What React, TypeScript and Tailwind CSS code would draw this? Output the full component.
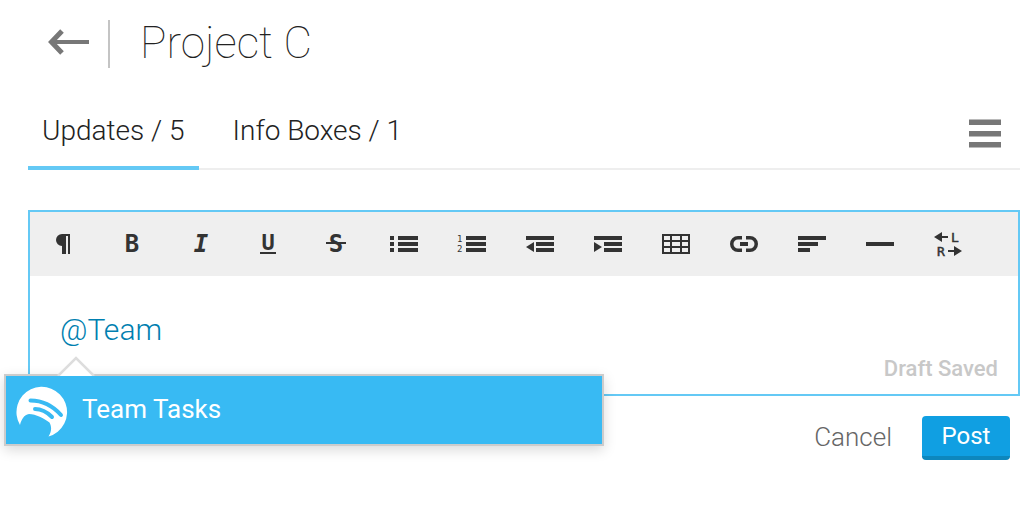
import React from 'react';

type Tool = { label: string; icon: React.ReactNode };

const mono = '"DejaVu Sans Mono", monospace';

const TOOLS: Tool[] = [
  { label: 'Paragraph', icon: <path d="M12 4h8v20h-2V6h-2v18h-4v-8a6 6 0 0 1 0-12z" /> },
  {
    label: 'Bold',
    icon: <text x="14" y="22" textAnchor="middle" fontFamily={mono} fontWeight="700" fontSize="24">B</text>,
  },
  {
    label: 'Italic',
    icon: <text x="15" y="22" textAnchor="middle" fontFamily={mono} fontWeight="700" fontStyle="italic" fontSize="24">I</text>,
  },
  {
    label: 'Underline',
    icon: (
      <>
        <text x="14" y="20" textAnchor="middle" fontFamily={mono} fontWeight="700" fontSize="22">U</text>
        <rect x="6" y="22" width="16" height="2" />
      </>
    ),
  },
  {
    label: 'Strikethrough',
    icon: (
      <>
        <text x="14" y="22" textAnchor="middle" fontFamily={mono} fontWeight="700" fontSize="24">S</text>
        <rect x="4" y="12" width="20" height="2" />
      </>
    ),
  },
  {
    label: 'Bulleted list',
    icon: <path d="M0 6h4v4H0zM8 6h20v4H8zM0 12h4v4H0zM8 12h20v4H8zM0 18h4v4H0zM8 18h20v4H8z" />,
  },
  {
    label: 'Numbered list',
    icon: (
      <>
        <text x="-1" y="12" fontFamily={mono} fontSize="9">1</text>
        <text x="-1" y="22" fontFamily={mono} fontSize="9">2</text>
        <path d="M8 6h20v4H8zM8 12h20v4H8zM8 18h20v4H8z" />
      </>
    ),
  },
  { label: 'Outdent', icon: <path d="M0 6h28v4H0zM10 12h18v4H10zM10 18h18v4H10zM8 12v10L0 17z" /> },
  { label: 'Indent', icon: <path d="M0 6h28v4H0zM10 12h18v4H10zM10 18h18v4H10zM0 12v10l8-5z" /> },
  {
    label: 'Table',
    icon: <path fill="none" stroke="currentColor" strokeWidth="2" d="M1 5h26v18H1zM1 11h26M1 17h26M9 5v18M19 5v18" />,
  },
  {
    label: 'Link',
    icon: (
      <>
        <path
          fill="none"
          stroke="currentColor"
          strokeWidth="3.500"
          d="M12 7.750H8a6.250 6.250 0 0 0 0 12.500h4M16 7.750h4a6.250 6.250 0 0 1 0 12.500h-4"
        />
        <rect x="10" y="12" width="8" height="4" />
      </>
    ),
  },
  { label: 'Align', icon: <path d="M0 6h28v4H0zM0 12h20v4H0zM0 18h12v4H0z" /> },
  { label: 'Horizontal rule', icon: <rect y="12" width="28" height="4" /> },
  {
    label: 'Text direction',
    icon: (
      <>
        <path d="M0 7l8-5v4h6v2H8v4zM28 21l-8-5v4h-6v2h6v4z" />
        <g fontFamily={mono} fontSize="13" stroke="currentColor" strokeWidth="0.500">
          <text x="17" y="12">L</text>
          <text x="3" y="26">R</text>
        </g>
      </>
    ),
  },
];

function TeamLogo() {
  return (
    <svg viewBox="0 0 52 52" className="h-[52px] w-[52px] shrink-0" aria-hidden="true">
      <path
        fill="#fff"
        d="M4 39A25.300 25.300 0 1 1 32.500 50.500C35.500 45.500 36 41 33.500 36.500C28 32.500 20 28 13 28C8 29 5.500 33 4 39z"
      />
      <path
        fill="none"
        stroke="#38baf3"
        strokeWidth="4"
        strokeLinecap="round"
        d="M14.500 14.500C26 14.500 37 20 45 29M19 23C26 23 31 26 36 31"
      />
    </svg>
  );
}

function Toolbar() {
  return (
    <div role="toolbar" aria-label="Formatting" className="flex h-16 bg-[#efefef] text-[#333]">
      {TOOLS.map((tool) => (
        <button key={tool.label} type="button" aria-label={tool.label} className="flex w-[68px] items-center justify-center">
          <svg viewBox="0 0 28 28" className="h-7 w-7 overflow-visible" fill="currentColor">
            {tool.icon}
          </svg>
        </button>
      ))}
    </div>
  );
}

function MentionMenu() {
  return (
    <div className="absolute -left-[26px] top-[162px] w-[600px] border-2 border-[#ccc] bg-[#38baf3] shadow-[0_4px_12px_rgba(0,0,0,0.15)]">
      {/* pointer towards the mention */}
      <svg viewBox="0 0 40 20" className="absolute -top-5 left-[50px] h-5 w-10" aria-hidden="true">
        <path d="M2 20L20 2l18 18z" fill="#fff" />
        <path d="M2 20L20 2l18 18" fill="none" stroke="#ddd" strokeWidth="2.500" />
      </svg>
      <button type="button" className="flex h-[68px] w-full items-center gap-[14px] pt-1 pl-[10px] text-left">
        <TeamLogo />
        <span className="pb-1.5 text-[26px] leading-8 text-white">Team Tasks</span>
      </button>
    </div>
  );
}

export default function App() {
  const [draft, setDraft] = React.useState('@Team');

  return (
    <div className="bg-white pt-5 pr-4 pb-12 pl-7 text-[#222] [font-family:Roboto,sans-serif]">
      <header className="flex h-12 items-center">
        <a href="#back" aria-label="Back" className="flex w-20 justify-end pr-[18px] pb-1">
          <svg viewBox="0 0 42 26" className="h-[26px] w-[42px]" fill="none" stroke="#777" aria-hidden="true">
            <path strokeWidth="4" d="M3 13h38" />
            <path strokeWidth="5" d="M14 2L3.500 13 14 24" />
          </svg>
        </a>
        <div className="h-12 w-0.5 bg-[#c4c4c4]" />
        <h1 className="pb-0.5 pl-[30px] text-[44px] leading-[46px] font-thin">Project C</h1>
      </header>

      <nav className="mt-8 flex h-[70px] justify-between shadow-[inset_0_-2px_0_#eee]">
        <div className="flex gap-5 text-[28px] leading-[62px] font-light">
          <a href="#updates" aria-current="page" className="border-b-4 border-[#64c9f5] px-[14px]">
            Updates / 5
          </a>
          <a href="#info-boxes" className="px-[14px]">
            Info Boxes / 1
          </a>
        </div>
        <button type="button" aria-label="Menu" className="mr-[19px] flex items-center pb-0.5">
          <svg viewBox="0 0 32 30" className="h-[30px] w-8" fill="#777">
            <path d="M0 0.500h32v5.500H0zM0 12h32v5.500H0zM0 23h32v5.500H0z" />
          </svg>
        </button>
      </nav>

      <form className="mt-10" onSubmit={(e) => e.preventDefault()}>
        <div className="relative border-2 border-[#64c9f5]">
          <Toolbar />
          <textarea
            aria-label="Update"
            rows={1}
            value={draft}
            onChange={(e) => setDraft(e.target.value)}
            className="mt-9 block h-9 w-full resize-none overflow-hidden px-[30px] text-[30px] leading-9 font-light text-[#007fb0] outline-none"
          />
          <p className="mt-2 pr-5 pb-3 text-right text-[22px] leading-[26px] font-medium text-[#c8c8c8]">Draft Saved</p>
          <MentionMenu />
        </div>

        <div className="mt-5 flex items-center justify-end pr-[10px]">
          <button type="button" className="px-[30px] pb-0.5 text-[26px] leading-10 font-light text-[#666]">
            Cancel
          </button>
          <button type="submit" className="h-11 w-[88px] rounded border-b-4 border-[#0d87bd] bg-[#109fe2] text-[24px] leading-10 text-white">
            Post
          </button>
        </div>
      </form>
    </div>
  );
}
